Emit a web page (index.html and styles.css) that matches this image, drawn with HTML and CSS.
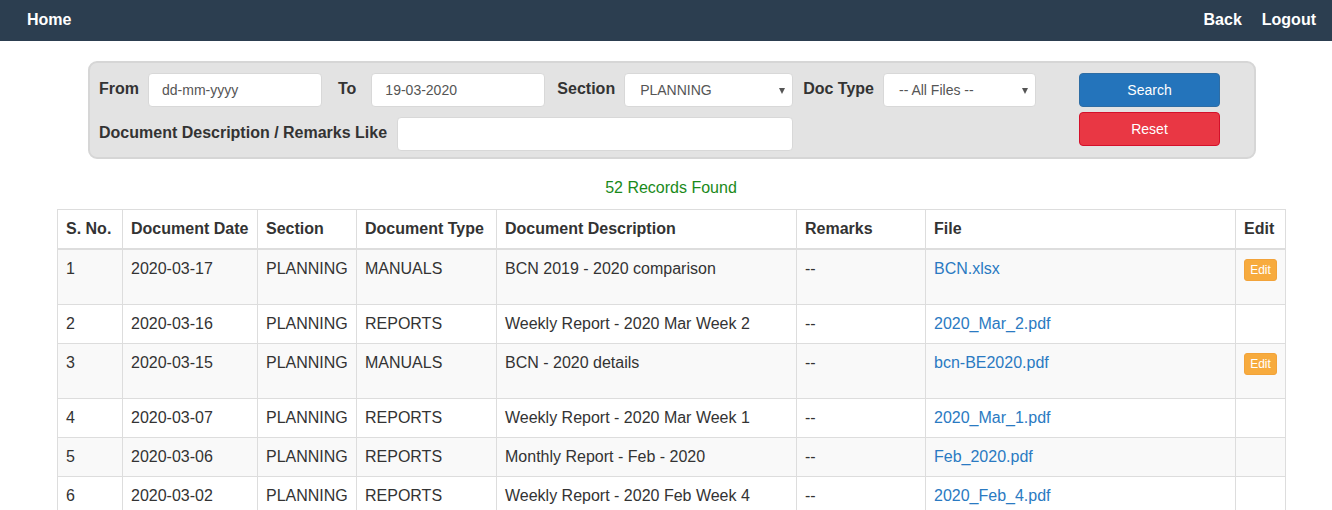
FILE: index.html
```html
<!DOCTYPE html>
<html>
<head>
<meta charset="utf-8">
<link rel="stylesheet" href="styles.css">
</head>
<body>
<nav class="navbar">
  <a class="nav-link" href="#">Home</a>
  <div class="nav-right">
    <a class="nav-link" href="#">Back</a>
    <a class="nav-link" href="#">Logout</a>
  </div>
</nav>
<main class="main">
  <form class="filter">
    <div class="filter-fields">
      <div class="frow">
        <label class="lbl">From</label>
        <input class="ctl w-from gap-16" type="text" placeholder="dd-mm-yyyy">
        <label class="lbl lbl-to">To</label>
        <input class="ctl w-to gap-12" type="text" value="19-03-2020">
        <label class="lbl">Section</label>
        <div class="sel w-sec gap-10"><span>PLANNING</span></div>
        <label class="lbl">Doc Type</label>
        <div class="sel w-doc"><span>-- All Files --</span></div>
      </div>
      <div class="frow">
        <label class="lbl lbl-desc">Document Description / Remarks Like</label>
        <input class="ctl w-desc" type="text">
      </div>
    </div>
    <div class="filter-btns">
      <button type="button" class="btn btn-primary">Search</button>
      <button type="button" class="btn btn-danger">Reset</button>
    </div>
  </form>
  <p class="found">52 Records Found</p>
  <table class="tbl">
    <colgroup>
      <col style="width:65px"><col style="width:135px"><col style="width:99px"><col style="width:140px"><col style="width:300px"><col style="width:129px"><col style="width:310px"><col style="width:50px">
    </colgroup>
    <thead>
      <tr><th>S. No.</th><th>Document Date</th><th>Section</th><th>Document Type</th><th>Document Description</th><th>Remarks</th><th>File</th><th>Edit</th></tr>
    </thead>
    <tbody>
      <tr><td>1</td><td>2020-03-17</td><td>PLANNING</td><td>MANUALS</td><td>BCN 2019 - 2020 comparison</td><td>--</td><td><a href="#">BCN.xlsx</a></td><td><div class="edit-form"><button type="button" class="btn-edit">Edit</button></div></td></tr>
      <tr><td>2</td><td>2020-03-16</td><td>PLANNING</td><td>REPORTS</td><td>Weekly Report - 2020 Mar Week 2</td><td>--</td><td><a href="#">2020_Mar_2.pdf</a></td><td></td></tr>
      <tr><td>3</td><td>2020-03-15</td><td>PLANNING</td><td>MANUALS</td><td>BCN - 2020 details</td><td>--</td><td><a href="#">bcn-BE2020.pdf</a></td><td><div class="edit-form"><button type="button" class="btn-edit">Edit</button></div></td></tr>
      <tr><td>4</td><td>2020-03-07</td><td>PLANNING</td><td>REPORTS</td><td>Weekly Report - 2020 Mar Week 1</td><td>--</td><td><a href="#">2020_Mar_1.pdf</a></td><td></td></tr>
      <tr><td>5</td><td>2020-03-06</td><td>PLANNING</td><td>REPORTS</td><td>Monthly Report - Feb - 2020</td><td>--</td><td><a href="#">Feb_2020.pdf</a></td><td></td></tr>
      <tr><td>6</td><td>2020-03-02</td><td>PLANNING</td><td>REPORTS</td><td>Weekly Report - 2020 Feb Week 4</td><td>--</td><td><a href="#">2020_Feb_4.pdf</a></td><td></td></tr>
    </tbody>
  </table>
</main>
</body>
</html>
```
FILE: styles.css
```css
* { box-sizing: border-box; }
html, body { margin: 0; padding: 0; }
body {
  font-family: "Liberation Sans", Arial, Helvetica, sans-serif;
  font-size: 16px;
  color: #333;
  background: #fff;
  overflow: hidden;
}
.navbar {
  height: 41px;
  background: #2c3e50;
  display: flex;
  align-items: center;
  justify-content: space-between;
  padding: 0 16px 2px 27px;
}
.nav-right { display: flex; gap: 20px; }
.nav-link {
  color: #fff;
  font-weight: bold;
  font-size: 16px;
  text-decoration: none;
}
.main {
  padding: 20px 47px 0 57px;
}
.filter {
  margin: 0 29px 0 31px;
  background: #e3e3e3;
  border: 2px solid #d6d6d6;
  border-radius: 9px;
  padding: 10px 34px 6px 9px;
  display: flex;
  justify-content: space-between;
}
.filter-fields { display: flex; flex-direction: column; gap: 10px; }
.frow { display: flex; align-items: center; }
.lbl {
  font-weight: bold;
  font-size: 16px;
  color: #333;
  margin-right: 9px;
  padding-bottom: 3px;
}
.lbl-to { margin-right: 15px; }
.lbl-desc { margin-right: 10px; }
.ctl, .sel {
  height: 34px;
  background: #fff;
  border: 1px solid #d8d8d8;
  border-radius: 4px;
  font-family: "Liberation Sans", Arial, sans-serif;
  font-size: 14px;
  color: #555;
  padding: 6px 13px;
}
.ctl::placeholder { color: #555; }
.sel {
  position: relative;
  display: flex;
  align-items: center;
  padding-left: 15px;
}
.sel::after {
  content: "";
  position: absolute;
  right: 7px;
  top: 14px;
  border-left: 3.5px solid transparent;
  border-right: 3.5px solid transparent;
  border-top: 6px solid #555;
}
.w-from { width: 174px; }
.w-to { width: 174px; }
.w-sec { width: 169px; }
.w-doc { width: 153px; }
.w-desc { width: 396px; }
.gap-16 { margin-right: 16px; }
.gap-12 { margin-right: 12px; }
.gap-10 { margin-right: 10px; }
.filter-btns { display: flex; flex-direction: column; gap: 5px; }
.btn {
  width: 141px;
  height: 34px;
  border-radius: 4px;
  font-family: "Liberation Sans", Arial, sans-serif;
  font-size: 14px;
  color: #fff;
  border: 1px solid transparent;
}
.btn-primary { background: #2474bb; border-color: #2e6da4; }
.btn-danger { background: #e93744; border-color: #d4102a; }
.found {
  margin: 18px 0 10px;
  text-align: center;
  color: #1a8a1a;
  font-size: 16px;
  line-height: 22px;
}
.tbl {
  width: 100%;
  border-collapse: collapse;
  table-layout: fixed;
  border: 1px solid #ddd;
}
.tbl th, .tbl td {
  border: 1px solid #ddd;
  padding: 8px 8px;
  line-height: 22px;
  height: 39px;
  text-align: left;
  vertical-align: top;
  font-size: 16px;
  white-space: nowrap;
}
.tbl th {
  font-weight: bold;
  border-bottom: 2px solid #ddd;
}
.tbl tbody tr:nth-child(odd) { background: #f9f9f9; }
.tbl a { color: #2a7ac2; text-decoration: none; }
.edit-form { height: 38px; }
.btn-edit {
  margin-top: 1px;
  background: #f7ab3e;
  border: 1px solid #f2a33a;
  border-radius: 3px;
  color: #fff;
  font-family: "Liberation Sans", Arial, sans-serif;
  font-size: 12px;
  padding: 2px 5px;
  height: 22px;
  width: 33px;
}
```
